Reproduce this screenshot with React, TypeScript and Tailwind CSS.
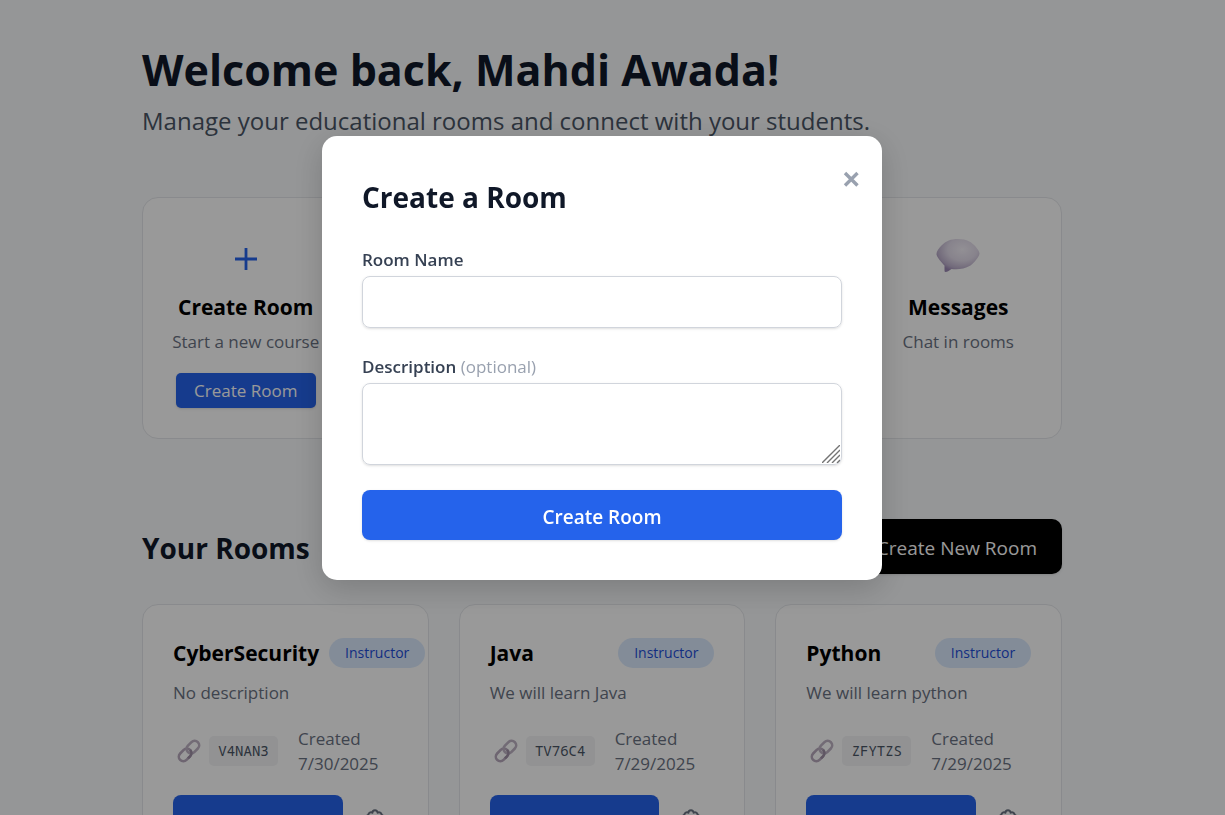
import React, { useState } from "react";

type IconProps = { className?: string };

function SpeechBubble({ className }: IconProps) {
  return (
    <svg className={className} viewBox="0 0 44 36" aria-hidden="true">
      <defs>
        <radialGradient id="bubble" cx="0.6" cy="0.32" r="0.68">
          <stop offset="0" stopColor="#f4f0f8" />
          <stop offset="0.5" stopColor="#e2dbea" />
          <stop offset="0.85" stopColor="#bdb0cc" />
          <stop offset="1" stopColor="#9c89b4" />
        </radialGradient>
      </defs>
      <path
        d="M22 1 C31 1 36 4.500 39.500 8.500 C42 11.500 43.500 14 43.500 15.500 C43.500 18 39 24 34.500 27.500 C28 31.500 21 31.500 15.500 31 C13.500 32.500 11.500 34 9.500 34 C8.500 34 8.500 33 8.500 32 L8.500 27.500 C6 25 .5 19 .5 16 C.5 13.500 2.500 10.500 5.500 7.500 C10 3 15 1 22 1 Z"
        fill="url(#bubble)"
      />
    </svg>
  );
}

function LinkEmoji({ className }: IconProps) {
  return (
    <svg className={className} viewBox="0 0 24 24" fill="none" aria-hidden="true">
      <g transform="rotate(-45 12 12)" strokeWidth="2.600">
        <rect x="-0.5" y="7.500" width="14" height="9" rx="4.500" stroke="#b7a9bc" />
        <rect x="10.500" y="7.500" width="14" height="9" rx="4.500" stroke="#beb2c4" />
        <path d="M6 16.500 H9 A4.500 4.500 0 0 0 13.500 12" stroke="#9f90a6" />
      </g>
    </svg>
  );
}

function GearOutline({ className }: IconProps) {
  return (
    <svg className={className} viewBox="0 0 24 24" fill="none" stroke="currentColor" strokeWidth="2" aria-hidden="true">
      <path
        strokeLinejoin="round"
        d="M9.400 4.800 A2.600 2.600 0 0 1 14.600 4.800 A2.500 2.500 0 0 1 18.600 6.800 A2.500 2.500 0 0 1 20.200 10.200 A2.500 2.500 0 0 1 20.200 14.400 A2.500 2.500 0 0 1 17.400 18.600 A2.500 2.500 0 0 1 12 20.500 A2.500 2.500 0 0 1 6.600 18.600 A2.500 2.500 0 0 1 3.800 14.400 A2.500 2.500 0 0 1 3.800 10.200 A2.500 2.500 0 0 1 5.400 6.800 A2.500 2.500 0 0 1 9.400 4.800 Z"
      />
      <circle cx="12" cy="12" r="3.500" />
    </svg>
  );
}

type ActionCardProps = {
  icon: React.ReactNode;
  title: string;
  text: string;
  action?: string;
};

function ActionCard({ icon, title, text, action }: ActionCardProps) {
  return (
    <article className="flex flex-col items-center rounded-2xl border border-gray-200 bg-white px-5 pt-9 pb-[30px] whitespace-nowrap">
      <div className="flex h-12 items-center justify-center text-[#2563eb]">{icon}</div>
      <h3 className="mt-[11px] text-[21px] leading-7 font-bold text-black">{title}</h3>
      <p className="mt-[5px] text-[17px] leading-8 text-gray-500">{text}</p>
      {action && (
        <button type="button" className="mt-[15px] h-[35px] w-[140px] rounded-[5px] bg-[#2563eb] text-[17px] text-white shadow-sm">
          {action}
        </button>
      )}
    </article>
  );
}

type Room = { name: string; description: string; code: string; created: string };

const rooms: Room[] = [
  { name: "CyberSecurity", description: "No description", code: "V4NAN3", created: "7/30/2025" },
  { name: "Java", description: "We will learn Java", code: "TV76C4", created: "7/29/2025" },
  { name: "Python", description: "We will learn python", code: "ZFYTZS", created: "7/29/2025" },
];

function RoomCard({ room }: { room: Room }) {
  return (
    <article className="rounded-2xl border border-gray-200 bg-white px-[30px] pt-[30px] pb-8">
      <div className="flex items-center justify-between gap-[10px] pt-[3px]">
        <h3 className="text-[21px] leading-[30px] font-bold text-black">{room.name}</h3>
        <span className="h-[30px] w-24 shrink-0 rounded-full bg-blue-100 text-center text-[14px] leading-[30px] font-medium text-[#1d4ed8]">
          Instructor
        </span>
      </div>
      <p className="mt-3 text-[17px] leading-[26px] text-gray-500">{room.description}</p>
      <div className="mt-5 flex items-center">
        <LinkEmoji className="ml-1 size-6 shrink-0" />
        <code className="ml-2 h-[30px] w-[69px] shrink-0 rounded-[5px] bg-gray-100 text-center font-['Noto_Sans_Mono','DejaVu_Sans_Mono',monospace] text-[14px] leading-[30px] text-gray-600">
          {room.code}
        </code>
        <p className="ml-5 text-[17px] leading-[25px] text-gray-500">
          Created
          <br />
          {room.created}
        </p>
      </div>
      <div className="mt-[19px] flex items-start">
        <button type="button" className="flex-1 rounded-[8px] bg-[#2563eb] py-6 text-[17px] leading-6 text-white">
          Enter Room
        </button>
        <button type="button" aria-label="Room settings" className="mr-[5px] ml-[14px] flex w-9 justify-center pt-[13px] text-gray-500">
          <GearOutline className="size-6" />
        </button>
      </div>
    </article>
  );
}

function CreateRoomDialog({ onClose }: { onClose: () => void }) {
  return (
    <div className="fixed inset-0 flex items-start justify-center overflow-hidden bg-black/40 pt-[136px] pr-[21px]">
      <div
        role="dialog"
        aria-modal="true"
        aria-labelledby="dialog-title"
        className="relative w-full max-w-[560px] rounded-[15px] bg-white p-10 shadow-[0_8px_32px_rgba(0,0,0,0.18)]"
      >
        <button
          type="button"
          aria-label="Close"
          onClick={onClose}
          className="absolute top-[34px] right-[22px] text-gray-400"
        >
          <svg className="size-[18px]" viewBox="0 0 18 18" stroke="currentColor" strokeWidth="3.400" aria-hidden="true">
            <path d="M3 3 L15.500 15.500 M15.500 3 L3 15.500" />
          </svg>
        </button>
        <h2 id="dialog-title" className="pt-[3px] text-[28px] leading-9 font-bold text-gray-900">
          Create a Room
        </h2>
        <form onSubmit={(event) => event.preventDefault()}>
          <label htmlFor="room-name" className="mt-8 block text-[17px] leading-[26px] font-semibold text-gray-700">
            Room Name
          </label>
          <input
            id="room-name"
            type="text"
            className="mt-[3px] block h-[52px] w-full rounded-[8px] border border-gray-300 px-4 text-[17px] shadow-sm outline-none"
          />
          <label htmlFor="room-description" className="mt-[26px] block text-[17px] leading-[26px] font-semibold text-gray-700">
            Description <span className="font-normal text-gray-400">(optional)</span>
          </label>
          <div className="relative mt-[3px]">
            <textarea
              id="room-description"
              className="block h-[82px] w-full resize-none rounded-[8px] border border-gray-300 px-4 py-3 text-[17px] shadow-sm outline-none"
            />
            <svg
              className="pointer-events-none absolute right-[2px] bottom-[2px] size-[18px] text-neutral-500"
              viewBox="0 0 18 18"
              stroke="currentColor"
              strokeWidth="1.400"
              aria-hidden="true"
            >
              <path d="M0 18 L18 0 M5 18 L18 5 M10 18 L18 10 M15 18 L18 15" />
            </svg>
          </div>
          <button
            type="submit"
            className="mt-[25px] h-[50px] w-full rounded-[8px] bg-[#2563eb] pt-1 text-[19px] font-semibold text-white shadow-sm"
          >
            Create Room
          </button>
        </form>
      </div>
    </div>
  );
}

export default function App() {
  const [open, setOpen] = useState(true);
  const plus = (
    <svg className="mt-[2px] size-[22px]" viewBox="0 0 22 22" stroke="currentColor" strokeWidth="2.800" aria-hidden="true">
      <path d="M11 0 V22 M0 11 H22" />
    </svg>
  );

  return (
    <div className="h-screen overflow-hidden bg-slate-50 pr-[21px] font-['Open_Sans','Noto_Sans',sans-serif]">
      <main className="mx-auto max-w-[920px] pt-10">
        <h1 className="text-[43px] leading-[59px] font-bold text-gray-900">Welcome back, Mahdi Awada!</h1>
        <p className="mt-1 text-[24px] leading-[35px] text-gray-600">
          Manage your educational rooms and connect with your students.
        </p>
        <section className="mt-[59px] grid grid-cols-4 gap-[30px]">
          <ActionCard icon={plus} title="Create Room" text="Start a new course" action="Create Room" />
          <ActionCard icon={plus} title="Join Room" text="Enter a code" action="Join Room" />
          <ActionCard icon={plus} title="My Rooms" text="View all rooms" />
          <ActionCard icon={<SpeechBubble className="mb-1 h-9 w-11" />} title="Messages" text="Chat in rooms" />
        </section>
        <div className="mt-20 flex items-center justify-between">
          <h2 className="pt-[3px] text-[28px] leading-9 font-bold text-gray-900">Your Rooms</h2>
          <button
            type="button"
            onClick={() => setOpen(true)}
            className="h-[55px] rounded-[10px] bg-black px-[25px] pt-1 text-[19px] text-white shadow-sm"
          >
            + Create New Room
          </button>
        </div>
        <section className="mt-[30px] grid grid-cols-3 gap-[30px]">
          {rooms.map((room) => (
            <RoomCard key={room.code} room={room} />
          ))}
        </section>
      </main>
      {open && <CreateRoomDialog onClose={() => setOpen(false)} />}
    </div>
  );
}
